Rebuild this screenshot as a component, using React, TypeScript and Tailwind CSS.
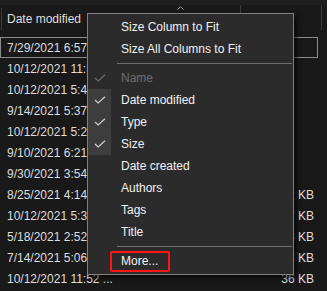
import React from 'react';

const rows = [
  { date: '7/29/2021 6:57 PM', size: '' },
  { date: '10/12/2021 11:52 AM', size: '' },
  { date: '10/12/2021 5:45 PM', size: '' },
  { date: '9/14/2021 5:37 PM', size: '' },
  { date: '10/12/2021 5:24 PM', size: '' },
  { date: '9/10/2021 6:21 PM', size: '' },
  { date: '9/30/2021 3:54 PM', size: '' },
  { date: '8/25/2021 4:14 PM', size: '12 KB' },
  { date: '10/12/2021 5:37 PM', size: '17 KB' },
  { date: '5/18/2021 2:52 PM', size: '13 KB' },
  { date: '7/14/2021 5:06 PM', size: '13 KB' },
  { date: '10/12/2021 11:52 ...', size: '36 KB' },
];

type Item =
  | { kind: 'sep' }
  | { kind: 'item'; label: string; checked?: boolean; disabled?: boolean };

const items: Item[] = [
  { kind: 'item', label: 'Size Column to Fit' },
  { kind: 'item', label: 'Size All Columns to Fit' },
  { kind: 'sep' },
  { kind: 'item', label: 'Name', checked: true, disabled: true },
  { kind: 'item', label: 'Date modified', checked: true },
  { kind: 'item', label: 'Type', checked: true },
  { kind: 'item', label: 'Size', checked: true },
  { kind: 'item', label: 'Date created' },
  { kind: 'item', label: 'Authors' },
  { kind: 'item', label: 'Tags' },
  { kind: 'item', label: 'Title' },
  { kind: 'sep' },
  { kind: 'item', label: 'More...' },
];

const Check = ({ dim }: { dim?: boolean }) => (
  <svg width="12" height="8" viewBox="0 0 12 8" fill="none">
    <path d="M1 4 L4.2 7 L11 0.8" stroke={dim ? '#6a6a6a' : '#cfcfcf'} strokeWidth="1.2" />
  </svg>
);

const App: React.FC = () => {
  return (
    <div
      className="relative w-[327px] h-[291px] overflow-hidden bg-[#191919] text-[12px] text-[#dedede]"
      style={{ fontFamily: '"Liberation Sans", Arial, sans-serif' }}
    >
      <div className="h-[5px] bg-[#1f1f1f]" />
      {/* header */}
      <div className="relative h-[28px] flex items-center">
        <div className="absolute left-[1px] top-[3px] h-[22px] w-px bg-[#3c3c3c]" />
        <div className="absolute left-[240px] top-0 h-[8px] w-px bg-[#3c3c3c]" />
        <div className="absolute left-[321px] top-0 h-[25px] w-px bg-[#3c3c3c]" />
        <svg className="absolute left-[177px] top-[1px]" width="7" height="4" viewBox="0 0 7 4" fill="none">
          <path d="M0.5 3.5 L3.5 0.7 L6.5 3.5" stroke="#9a9a9a" strokeWidth="1" />
        </svg>
        <span className="pl-[7px] pt-[0px]">Date modified</span>
      </div>
      {/* rows */}
      <div className="mt-[4px] flex flex-col">
        {rows.map((r, i) => (
          <div
            key={i}
            className={
              'h-[21px] w-[318px] flex items-center justify-between box-border ' +
              (i === 0 ? 'border border-[#8a8a8a]' : '')
            }
          >
            <span className={i === 0 ? 'pl-[6px]' : 'pl-[7px]'}>{r.date}</span>
            <span className="pr-[4px]">{r.size}</span>
          </div>
        ))}
      </div>

      {/* context menu */}
      <div className="absolute left-[87px] top-[13px] w-[207px] h-[262px] bg-[#2b2b2b] border border-[#808080] shadow-[3px_3px_4px_rgba(0,0,0,0.6)] pt-[2px] flex flex-col">
        {items.map((it, i) =>
          it.kind === 'sep' ? (
            <div key={i} className="h-[7px] flex items-center pl-[29px] pr-[1px]">
              <div className="h-px w-full bg-[#6e6e6e]" />
            </div>
          ) : (
            <div key={i} className="h-[22px] flex items-center">
              <div
                className={
                  'w-[23px] h-[22px] flex items-center justify-center ' +
                  (it.checked && !it.disabled ? 'bg-[#3d3d3d]' : '')
                }
              >
                {it.checked && <Check dim={it.disabled} />}
              </div>
              <span className={'pl-[10px] ' + (it.disabled ? 'text-[#6d6d6d]' : 'text-[#f2f2f2]')}>
                {it.label}
              </span>
            </div>
          )
        )}
      </div>

      {/* annotation */}
      <div className="absolute left-[110px] top-[251px] w-[60px] h-[21px] border-2 border-[#ff1414] rounded-[2px]" />
    </div>
  );
};

export default App;
